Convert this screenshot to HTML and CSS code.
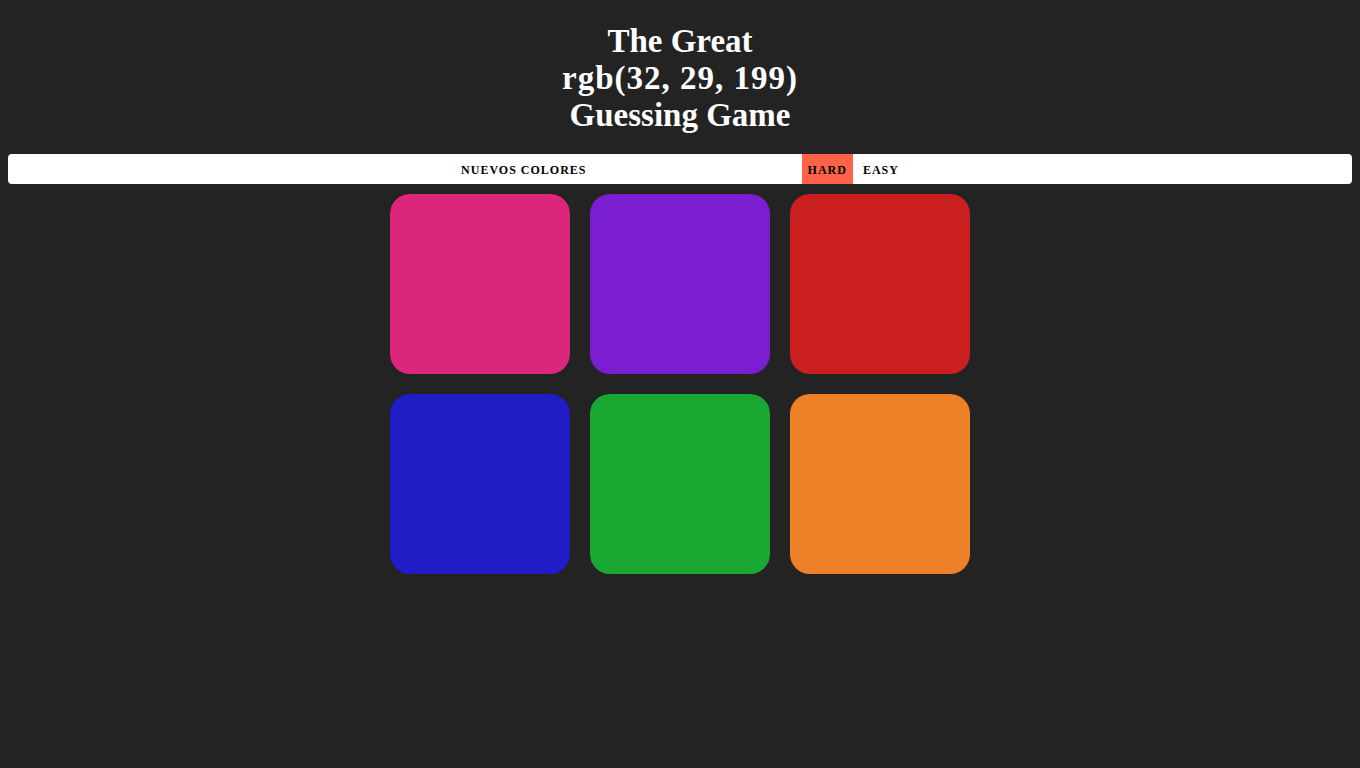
FILE: index.html
```html
<!DOCTYPE html>
<html lang="es">
<head>
<meta charset="utf-8">
<title>Color Game</title>
<link rel="stylesheet" href="styles.css">
</head>
<body>
<h1 class="title">The Great<br><span class="rgb">rgb(32, 29, 199)</span><br>Guessing Game</h1>
<div class="stripe">
  <button class="btn reset">Nuevos colores</button>
  <span class="message"></span>
  <button class="btn mode selected">Hard</button>
  <button class="btn mode easy">Easy</button>
</div>
<div class="board">
  <div class="square sq-pink"></div>
  <div class="square sq-purple"></div>
  <div class="square sq-red"></div>
  <div class="square sq-blue"></div>
  <div class="square sq-green"></div>
  <div class="square sq-orange"></div>
</div>
</body>
</html>
```
FILE: styles.css
```css
body {
  margin: 8px;
  background: #232323;
  font-family: "Liberation Serif", "Times New Roman", serif;
}
.title {
  margin: 15px 0 20px;
  color: #ffffff;
  text-align: center;
  font-size: 33px;
  font-weight: bold;
  line-height: 37px;
}
.rgb {
  letter-spacing: 1px;
}
.stripe {
  height: 30px;
  background: #ffffff;
  border-radius: 4px;
  display: flex;
  justify-content: center;
  align-items: stretch;
}
.btn {
  border: none;
  background: none;
  margin: 0;
  padding: 2px 10px 0;
  font-family: inherit;
  font-size: 12px;
  font-weight: bold;
  letter-spacing: 1px;
  text-transform: uppercase;
  color: #000;
  height: 30px;
}
.message {
  display: inline-block;
  width: 205px;
}
.mode {
  padding: 2px 6px 0;
}
.easy {
  padding: 2px 10px 0;
}
.selected {
  background: #ff6347;
}
.board {
  width: 580px;
  margin: 10px auto 0;
  display: grid;
  grid-template-columns: repeat(3, 180px);
  gap: 20px;
}
.square {
  width: 180px;
  height: 180px;
  border-radius: 20px;
}
.sq-pink { background: rgb(219, 38, 123); }
.sq-purple { background: rgb(123, 30, 207); }
.sq-red { background: rgb(203, 30, 30); }
.sq-blue { background: rgb(32, 29, 199); }
.sq-green { background: rgb(26, 168, 50); }
.sq-orange { background: rgb(238, 128, 39); }
```
